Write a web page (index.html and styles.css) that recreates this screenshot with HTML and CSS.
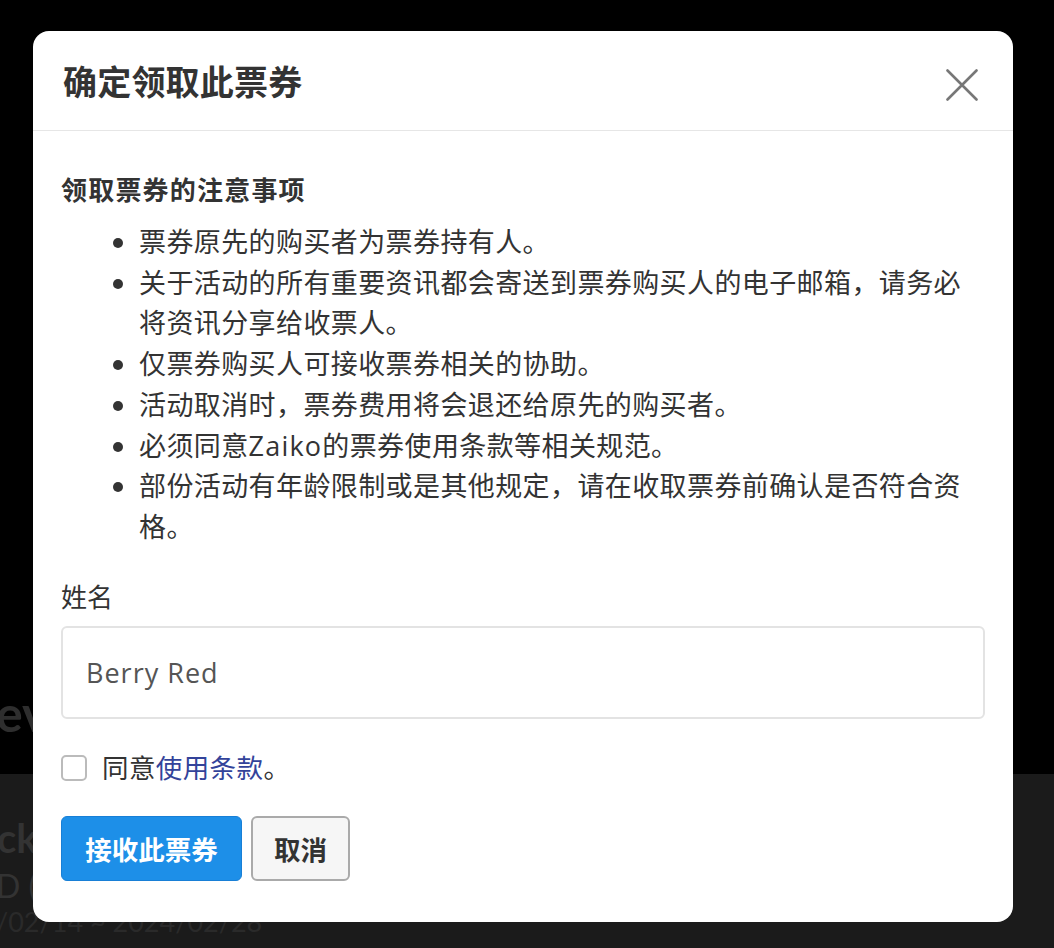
FILE: index.html
```html
<!DOCTYPE html>
<html lang="zh-CN">
<head>
<meta charset="utf-8">
<title>确定领取此票券</title>
<link rel="stylesheet" href="styles.css">
</head>
<body>
<div class="page">
  <section class="hero">
    <div class="hero-title">event</div>
  </section>
  <section class="info">
    <div class="info-name">ck</div>
    <div class="info-sub">D (</div>
    <div class="info-date">/02/14 ~ 2024/02/28</div>
  </section>
</div>

<div class="modal">
  <div class="modal-header">
    <h1 class="modal-title">确定领取此票券</h1>
    <button class="close-btn" aria-label="close">
      <svg width="32" height="32" viewBox="0 0 32 32"><path d="M1.5 1.5 L30.5 30.5 M30.5 1.5 L1.5 30.5" stroke="#777" stroke-width="2.6" stroke-linecap="round" fill="none"/></svg>
    </button>
  </div>
  <div class="modal-body">
    <h2 class="notes-title">领取票券的注意事项</h2>
    <ul class="notes">
      <li>票券原先的购买者为票券持有人。</li>
      <li>关于活动的所有重要资讯都会寄送到票券购买人的电子邮箱，请务必将资讯分享给收票人。</li>
      <li>仅票券购买人可接收票券相关的协助。</li>
      <li>活动取消时，票券费用将会退还给原先的购买者。</li>
      <li>必须同意<span class="latin">Zaiko</span>的票券使用条款等相关规范。</li>
      <li>部份活动有年龄限制或是其他规定，请在收取票券前确认是否符合资格。</li>
    </ul>
    <label class="field-label" for="name">姓名</label>
    <input class="field-input" id="name" type="text" value="Berry Red">
    <div class="agree">
      <span class="checkbox"></span>
      <span class="agree-text">同意<a href="#" class="link">使用条款</a>。</span>
    </div>
    <div class="actions">
      <button class="btn btn-primary">接收此票券</button>
      <button class="btn btn-default">取消</button>
    </div>
  </div>
</div>
</body>
</html>
```

FILE: styles.css
```css
* { box-sizing: border-box; }
html, body { margin: 0; padding: 0; }
body {
  width: 1054px;
  height: 948px;
  overflow: hidden;
  background: #1b1b1b;
  font-family: "Open Sans", "Noto Sans CJK SC", sans-serif;
  color: #333;
}
.page { display: flex; flex-direction: column; }
.hero {
  height: 774px;
  background: #000;
  display: flex;
  flex-direction: column;
  justify-content: flex-end;
}
.hero-title {
  font-family: "Lato", sans-serif;
  font-weight: 700;
  font-size: 50px;
  color: #2e2e2e;
  margin: 0 0 36px -4px;
  line-height: 1;
}
.info { padding-top: 44px; color: #333; font-family: "Lato", sans-serif; }
.info-name { font-weight: 700; font-size: 40px; line-height: 1; margin-left: -3px; }
.info-sub { font-size: 32px; line-height: 1; margin-top: 12px; margin-left: -4px; }
.info-date { font-size: 27px; line-height: 1; margin-top: 6px; margin-left: -4px; color: #2a2a2a; }

.modal {
  position: fixed;
  left: 33px;
  top: 31px;
  width: 980px;
  height: 891px;
  background: #fff;
  border-radius: 16px;
  overflow: hidden;
}
.modal-header {
  height: 100px;
  border-bottom: 1px solid #e6e6e6;
  display: flex;
  align-items: center;
  justify-content: space-between;
  padding: 0 35px 0 30px;
}
.modal-title {
  margin: 0;
  font-family: "Noto Sans CJK SC", sans-serif;
  font-size: 34px;
  font-weight: 700;
  color: #333;
  letter-spacing: 0.2px;
}
.close-btn {
  border: 0;
  background: none;
  padding: 0;
  margin-top: 9px;
  width: 32px;
  height: 32px;
  display: flex;
  cursor: pointer;
}
.modal-body {
  padding: 38px 28px 41px;
  font-size: 27px;
  font-family: "Open Sans", "Noto Sans CJK SC", sans-serif;
}
.notes-title {
  margin: 0;
  font-family: "Noto Sans CJK SC", sans-serif;
  font-size: 26px;
  font-weight: 700;
  line-height: 40px;
  color: #333;
  letter-spacing: 1.2px;
}
.notes {
  margin: 13px 0 0;
  padding-left: 78px;
  line-height: 40.7px;
  font-size: 27px;
  letter-spacing: 0.4px;
  color: #333;
}
.notes li { padding-left: 0; }
.latin { letter-spacing: 1.2px; }
.field-label {
  display: block;
  margin-top: 29px;
  line-height: 40px;
  font-size: 26px;
  letter-spacing: 0;
}
.field-input {
  display: block;
  margin-top: 9px;
  width: 100%;
  height: 93px;
  border: 2px solid #e3e3e3;
  border-radius: 6px;
  padding: 0 23px;
  font-family: "Open Sans", sans-serif;
  font-size: 27px;
  letter-spacing: 1px;
  color: #555;
  outline: none;
}
.agree {
  margin-top: 29px;
  height: 40px;
  display: flex;
  align-items: center;
}
.checkbox {
  width: 26px;
  height: 26px;
  border: 2px solid #bbb;
  border-radius: 5px;
  background: #fff;
  margin-right: 15px;
}
.agree-text { font-size: 26.5px; letter-spacing: 0.4px; line-height: 40px; color: #333; }
.link { color: #33439a; text-decoration: none; }
.actions {
  margin-top: 28px;
  display: flex;
  gap: 9px;
}
.btn {
  height: 65px;
  border-radius: 6px;
  font-family: "Noto Sans CJK SC", sans-serif;
  font-size: 26.5px;
  font-weight: 700;
  letter-spacing: 0;
  padding: 0;
  cursor: pointer;
}
.btn-primary {
  width: 181px;
  background: #1d8fe8;
  border: 1px solid #187fd6;
  color: #fff;
}
.btn-default {
  width: 99px;
  background: #f6f6f6;
  border: 2px solid #aaa;
  color: #333;
}
```
